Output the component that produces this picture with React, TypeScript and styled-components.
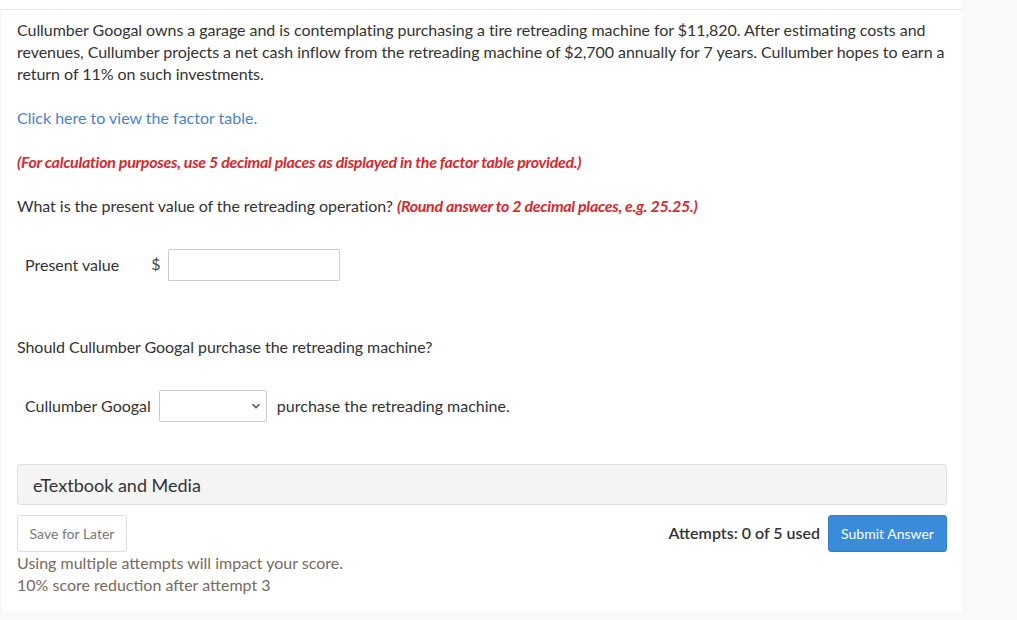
import styled, { createGlobalStyle } from 'styled-components';

const GlobalStyle = createGlobalStyle`
    body {
        margin: 0;
        background: #f9f9f9;
        font-family: Lato, "Open Sans", sans-serif;
        color: #333;
    }
`;

export default function App() {
    return (
        <>
            <GlobalStyle />
            <Card>
                <Question>
                    <Text $nowrap>
                        Cullumber Googal owns a garage and is contemplating purchasing a tire retreading machine for $11,820. After estimating costs and
                        <br />
                        revenues, Cullumber projects a net cash inflow from the retreading machine of $2,700 annually for 7 years. Cullumber hopes to earn a
                        <br />
                        return of 11% on such investments.
                    </Text>
                    <Link href="#">Click here to view the factor table.</Link>
                    <Note>(For calculation purposes, use 5 decimal places as displayed in the factor table provided.)</Note>
                    <Text>
                        What is the present value of the retreading operation? <Note as="span">(Round answer to 2 decimal places, e.g. 25.25.)</Note>
                    </Text>

                    <AnswerRow $top={32}>
                        <Label $gap={32}>Present value</Label>
                        <Currency>$</Currency>
                        <Input type="text" />
                    </AnswerRow>

                    <Text $top={55}>Should Cullumber Googal purchase the retreading machine?</Text>

                    <AnswerRow $top={32}>
                        <Label $gap={8}>Cullumber Googal</Label>
                        <SelectBox>
                            <svg width="10" height="10" viewBox="0 0 10 10">
                                <path d="M1.5 3.2 L5 6.7 L8.5 3.2" fill="none" stroke="#555" strokeWidth="1.6" />
                            </svg>
                        </SelectBox>
                        <Label $gap={0}>purchase the retreading machine.</Label>
                    </AnswerRow>

                    <MediaBar>eTextbook and Media</MediaBar>

                    <Actions>
                        <SaveButton>Save for Later</SaveButton>
                        <Attempts>Attempts: 0 of 5 used</Attempts>
                        <SubmitButton>Submit Answer</SubmitButton>
                    </Actions>
                    <Policy>
                        Using multiple attempts will impact your score.
                        <br />
                        10% score reduction after attempt 3
                    </Policy>
                </Question>
            </Card>
        </>
    );
}

const Card = styled.div`
    width: 962px;
    height: 612px;
    background: #fff;
    padding-top: 9px;
    box-sizing: border-box;
`;

const Question = styled.div`
    border-top: 1px solid #e8e8e8;
    border-left: 1px solid #f3f3f3;
    padding: 9px 15px 0 16px;
    height: 100%;
    box-sizing: border-box;
`;

const Text = styled.p<{ $top?: number; $nowrap?: boolean }>`
    margin: ${p => p.$top ?? 22}px 0 0;
    font-size: 16px;
    line-height: 22px;
    letter-spacing: -0.05px;
    color: #333;
    white-space: ${p => (p.$nowrap ? 'nowrap' : 'normal')};
    &:first-child {
        margin-top: 0;
    }
`;

const Link = styled.a`
    display: block;
    margin-top: 22px;
    font-size: 16px;
    line-height: 22px;
    color: #4a84c6;
    text-decoration: none;
`;

const Note = styled.p`
    margin: 22px 0 0;
    font-size: 16px;
    line-height: 22px;
    font-style: italic;
    font-weight: 700;
    letter-spacing: -0.3px;
    color: #d42a2f;
`;

const AnswerRow = styled.div<{ $top: number }>`
    display: flex;
    align-items: center;
    margin-top: ${p => p.$top}px;
    padding-left: 8px;
    font-size: 16px;
`;

const Label = styled.span<{ $gap?: number }>`
    margin-right: ${p => p.$gap ?? 30}px;
    margin-top: -2px;
    color: #333;
    &:last-child {
        margin-left: 10px;
    }
`;

const Currency = styled.span`
    margin-right: 7px;
    margin-top: -3px;
    color: #444;
`;

const Input = styled.input`
    width: 172px;
    height: 32px;
    box-sizing: border-box;
    border: 1px solid #ccc;
    border-radius: 1px;
`;

const SelectBox = styled.div`
    width: 108px;
    height: 32px;
    box-sizing: border-box;
    border: 1px solid #ccc;
    border-radius: 2px;
    display: flex;
    align-items: center;
    justify-content: flex-end;
    padding-right: 5px;
`;

const MediaBar = styled.div`
    margin-top: 42px;
    height: 41px;
    box-sizing: border-box;
    display: flex;
    align-items: center;
    padding-left: 15px;
    background: #f4f4f4;
    border: 1px solid #e0e0e0;
    border-radius: 3px;
    font-size: 18px;
    color: #333;
`;

const Actions = styled.div`
    display: flex;
    align-items: center;
    margin-top: 10px;
`;

const SaveButton = styled.button`
    height: 37px;
    width: 110px;
    background: #fff;
    border: 1px solid #ddd;
    border-radius: 3px;
    font-family: Lato, sans-serif;
    font-size: 14px;
    color: #777;
`;

const Attempts = styled.span`
    margin-left: auto;
    margin-right: 8px;
    margin-top: -3px;
    font-size: 16px;
    font-weight: 600;
    color: #333;
`;

const SubmitButton = styled.button`
    height: 37px;
    width: 119px;
    background: #3b8bdb;
    border: 1px solid #2f7fcf;
    border-radius: 3px;
    font-family: Lato, sans-serif;
    font-size: 14px;
    color: #fff;
`;

const Policy = styled.p`
    margin: 0;
    font-size: 16px;
    line-height: 22px;
    color: #776b5b;
`;
